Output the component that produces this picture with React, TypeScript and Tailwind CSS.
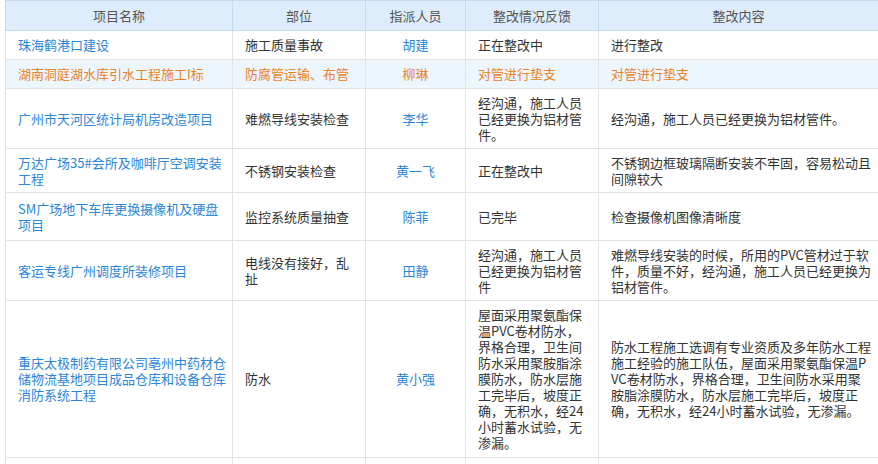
import React from 'react';

type Row = {
  name: string;
  part: string;
  person: string;
  feedback: string;
  content: string;
  h: number;
  hl?: boolean;
};

const rows: Row[] = [
  { name: '珠海鹤港口建设', part: '施工质量事故', person: '胡建', feedback: '正在整改中', content: '进行整改', h: 29 },
  { name: '湖南洞庭湖水库引水工程施工I标', part: '防腐管运输、布管', person: '柳琳', feedback: '对管进行垫支', content: '对管进行垫支', h: 29, hl: true },
  { name: '广州市天河区统计局机房改造项目', part: '难燃导线安装检查', person: '李华', feedback: '经沟通，施工人员已经更换为铝材管件。', content: '经沟通，施工人员已经更换为铝材管件。', h: 60 },
  { name: '万达广场35#会所及咖啡厅空调安装工程', part: '不锈钢安装检查', person: '黄一飞', feedback: '正在整改中', content: '不锈钢边框玻璃隔断安装不牢固，容易松动且间隙较大', h: 44 },
  { name: 'SM广场地下车库更换摄像机及硬盘项目', part: '监控系统质量抽查', person: '陈菲', feedback: '已完毕', content: '检查摄像机图像清晰度', h: 48 },
  { name: '客运专线广州调度所装修项目', part: '电线没有接好，乱扯', person: '田静', feedback: '经沟通，施工人员已经更换为铝材管件', content: '难燃导线安装的时候，所用的PVC管材过于软件，质量不好，经沟通，施工人员已经更换为铝材管件。', h: 60 },
  { name: '重庆太极制药有限公司亳州中药材仓储物流基地项目成品仓库和设备仓库消防系统工程', part: '防水', person: '黄小强', feedback: '屋面采用聚氨酯保温PVC卷材防水，界格合理，卫生间防水采用聚胺脂涂膜防水，防水层施工完毕后，坡度正确，无积水，经24小时蓄水试验，无渗漏。', content: '防水工程施工选调有专业资质及多年防水工程施工经验的施工队伍，屋面采用聚氨酯保温PVC卷材防水，界格合理，卫生间防水采用聚胺脂涂膜防水，防水层施工完毕后，坡度正确，无积水，经24小时蓄水试验，无渗漏。', h: 157 },
  { name: '', part: '', person: '', feedback: '', content: '', h: 30 },
];

const widths = ['w-[227px]', 'w-[133px]', 'w-[100px]', 'w-[133px]', 'w-[280px]'];

export default function App() {
  return (
    <div className="w-[878px] h-[464px] overflow-hidden bg-white pl-[5px]" style={{ fontFamily: '"Noto Sans CJK SC", "Noto Sans", sans-serif' }}>
      <table className="table-fixed border-collapse text-[13px] leading-4 w-[873px]">
        <thead>
          <tr className="h-[30px] bg-[#deedfb] text-[#555]">
            {['项目名称', '部位', '指派人员', '整改情况反馈', '整改内容'].map((t, i) => (
              <th key={t} className={`${widths[i]} font-normal border border-[#c3daf0] text-center`}>{t}</th>
            ))}
          </tr>
        </thead>
        <tbody>
          {rows.map((r, i) => {
            const c = r.hl ? 'text-[#e8842a]' : 'text-[#333]';
            const link = r.hl ? 'text-[#e8842a]' : 'text-[#2a86d8]';
            return (
              <tr key={i} className={r.hl ? 'bg-[#edf5fd]' : 'bg-white'} style={{ height: r.h }}>
                <td className={`border border-[#e3e3e3] pl-3 pr-1 ${link}`}>
                  <div className="w-[212px] break-all">{r.name}</div>
                </td>
                <td className={`border border-[#e3e3e3] px-3 ${c}`}>{r.part}</td>
                <td className={`border border-[#e3e3e3] text-center ${link}`}>{r.person}</td>
                <td className={`border border-[#e3e3e3] pl-3 pr-1 ${c}`}>
                  <div className="overflow-hidden w-[112px] break-all" style={{ maxHeight: r.h - 10 }}>{r.feedback}</div>
                </td>
                <td className={`border border-[#e3e3e3] pl-3 pr-1 ${c}`}>
                  <div className="w-[262px] break-all">{r.content}</div>
                </td>
              </tr>
            );
          })}
        </tbody>
      </table>
    </div>
  );
}
